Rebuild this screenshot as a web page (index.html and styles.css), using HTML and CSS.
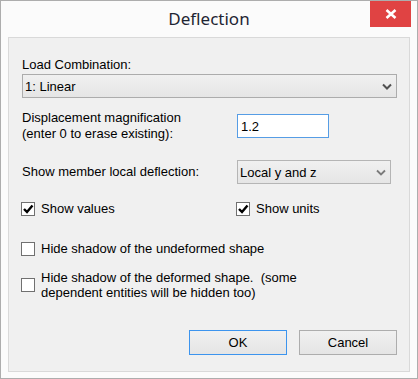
FILE: index.html
```html
<!DOCTYPE html>
<html lang="en">
<head>
    <meta charset="UTF-8">
    <meta name="viewport" content="width=device-width, initial-scale=1.0">
    <title>Deflection</title>
    <link rel="stylesheet" href="styles.css">
</head>
<body>
    <div class="window">
        <div class="titlebar">
            <span class="title">Deflection</span>
            <button class="close" title="Close">
                <svg width="12" height="10" viewBox="0 0 12 10">
                    <path d="M1.5 1 L10.5 9 M10.5 1 L1.5 9" stroke="#fff" stroke-width="2.6" fill="none"/>
                </svg>
            </button>
        </div>

        <div class="client">
            <div class="label">Load Combination:</div>
            <div class="select wide">
                <span>1: Linear</span>
                <svg class="chevron" width="10" height="7" viewBox="0 0 10 7">
                    <path d="M1 1.5 L5 5.5 L9 1.5" stroke="#505050" stroke-width="2" fill="none"/>
                </svg>
            </div>

            <div class="row mag">
                <div class="row-label">Displacement magnification<br>(enter 0 to erase existing):</div>
                <div class="textbox">1.2</div>
            </div>

            <div class="row local">
                <div class="row-label">Show member local deflection:</div>
                <div class="select narrow">
                    <span>Local y and z</span>
                    <svg class="chevron" width="10" height="7" viewBox="0 0 10 7">
                        <path d="M1 1.5 L5 5.5 L9 1.5" stroke="#7a7a7a" stroke-width="1.8" fill="none"/>
                    </svg>
                </div>
            </div>

            <div class="row checks">
                <label class="check col">
                    <span class="box">
                        <svg width="12" height="12" viewBox="0 0 12 12">
                            <path d="M2 6 L5 9 L10.5 2.5" stroke="#000" stroke-width="2.4" fill="none"/>
                        </svg>
                    </span>
                    Show values
                </label>
                <label class="check">
                    <span class="box">
                        <svg width="12" height="12" viewBox="0 0 12 12">
                            <path d="M2 6 L5 9 L10.5 2.5" stroke="#000" stroke-width="2.4" fill="none"/>
                        </svg>
                    </span>
                    Show units
                </label>
            </div>

            <label class="check undeformed">
                <span class="box"></span>
                Hide shadow of the undeformed shape
            </label>

            <label class="check deformed">
                <span class="box"></span>
                <span>Hide shadow of the deformed shape.&nbsp; (some<br>dependent entities will be hidden too)</span>
            </label>

            <div class="buttons">
                <button class="btn default">OK</button>
                <button class="btn">Cancel</button>
            </div>
        </div>
    </div>
</body>
</html>
```

FILE: styles.css
```css
body {
    margin: 0;
    font-family: "Liberation Sans", Arial, sans-serif;
    font-size: 13px;
    color: #000;
    background: #fff;
}

.window {
    width: 418px;
    height: 379px;
    box-sizing: border-box;
    border: 1px solid #adadad;
    background: #fbfbfb;
}

.titlebar {
    height: 36px;
    display: grid;
    grid-template-columns: 1fr auto 1fr;
}

.title {
    grid-column: 2;
    padding-top: 6px;
    font-family: "Noto Sans", "Open Sans", sans-serif;
    font-size: 17px;
    line-height: 24px;
    color: #1e2533;
}

.close {
    grid-column: 3;
    justify-self: end;
    align-self: start;
    width: 41px;
    height: 26px;
    margin-right: 6px;
    padding: 0;
    border: none;
    background: #e04343;
    display: flex;
    align-items: center;
    justify-content: center;
}

.client {
    height: 335px;
    margin: 0 7px;
    box-sizing: border-box;
    border: 1px solid #d9d9d9;
    background: #f0f0f0;
    padding: 19px 12px 0 13px;
}

.label {
    line-height: 16px;
    margin-bottom: 1px;
}

.select {
    height: 24px;
    box-sizing: border-box;
    border: 1px solid #acacac;
    background: linear-gradient(#f0f0f0, #e5e5e5);
    padding: 1px 4px 0 2px;
    display: flex;
    align-items: center;
    justify-content: space-between;
}

.select.narrow {
    width: 154px;
    border-color: #b5b5b5;
}

.row {
    display: flex;
    align-items: center;
}

.row-label {
    width: 215px;
    line-height: 16px;
}

.mag {
    margin-top: 12px;
}

.textbox {
    width: 92px;
    height: 24px;
    box-sizing: border-box;
    border: 1px solid #569de5;
    background: #fff;
    padding: 1px 3px 0;
    display: flex;
    align-items: center;
}

.local {
    margin-top: 18px;
}

.checks {
    margin-top: 17px;
}

.check {
    display: flex;
    align-items: center;
    gap: 6px;
    margin-left: -1px;
    line-height: 16px;
}

.check.col {
    width: 216px;
}

.box {
    width: 14px;
    height: 14px;
    box-sizing: border-box;
    border: 1px solid #707070;
    background: #fff;
    display: flex;
    align-items: center;
    justify-content: center;
}

.undeformed {
    margin-top: 24px;
}

.deformed {
    margin-top: 13px;
    line-height: 15px;
}

.buttons {
    margin-top: 30px;
    display: flex;
    justify-content: flex-end;
    gap: 12px;
}

.btn {
    width: 98px;
    height: 25px;
    padding: 0;
    border: 1px solid #adadad;
    background: linear-gradient(#f0f0f0, #e5e5e5);
    font-family: "Liberation Sans", Arial, sans-serif;
    font-size: 13px;
    color: #000;
}

.btn.default {
    border-color: #3c94ee;
}
```
